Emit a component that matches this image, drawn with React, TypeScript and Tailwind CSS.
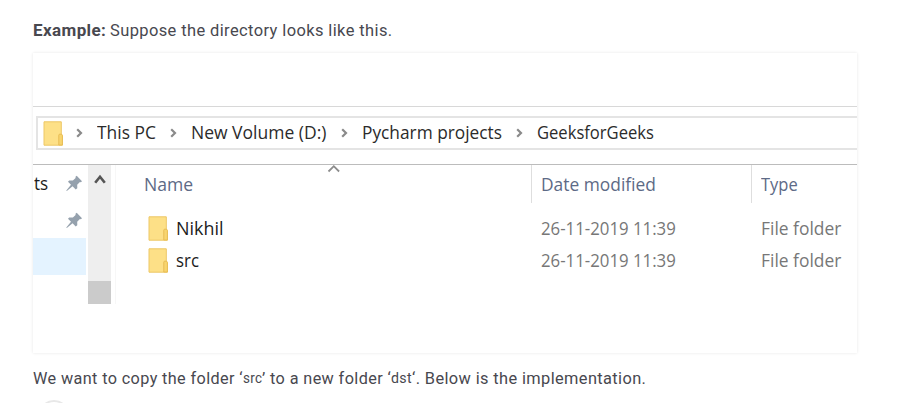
import { useLayoutEffect, useRef, useState } from "react";

const ui = "font-['Open_Sans','Noto_Sans',sans-serif]";
const body = "font-['Roboto','Liberation_Sans',sans-serif]";

/* Condenses or widens a run of text so that it fills a column of known width. */
function Fit({ text, width, className = "" }: { text: string; width: number; className?: string }) {
  const ref = useRef<HTMLSpanElement>(null);
  const [scale, setScale] = useState(1);
  useLayoutEffect(() => {
    if (ref.current) setScale(width / ref.current.offsetWidth);
  }, [width, text]);
  return (
    <span className={`block shrink-0 ${className}`} style={{ width }}>
      <span ref={ref} className="inline-block origin-left whitespace-pre" style={{ transform: `scaleX(${scale})` }}>
        {text}
      </span>
    </span>
  );
}

function Folder({ className = "" }: { className?: string }) {
  return (
    <svg className={`shrink-0 ${className}`} width="20" height="25" viewBox="0 0 20 25">
      <path d="M1 .8h17.3v12.8l1.1 1v9.6H1z" fill="#fde087" stroke="#edc766" strokeWidth="1" />
      <path d="M15.8 24V14.2q0-1 1-1h1.3q1.3 0 1.3 1.4V24z" fill="#f8d56f" stroke="#e8bd55" strokeWidth="1" />
    </svg>
  );
}

function Crumb({ className = "" }: { className?: string }) {
  return (
    <svg className={`shrink-0 ${className}`} width="7" height="10" viewBox="0 0 7 10">
      <path d="M1.2 1.2 5 5 1.2 8.8" fill="none" stroke="#8a8a8a" strokeWidth="2.2" />
    </svg>
  );
}

function Pin() {
  return (
    <svg className="shrink-0" width="17" height="17" viewBox="0 0 17 17">
      <path
        d="M10.7.8 16 6.2l-1.1 1-1-.2-2.7 2.7.1 3.5-1.6 1.2-3.1-3.2L.8 16l-.5-.4L5 9.7 2 6.8l1.2-1.3 3.7.1 2.7-2.7-.1-1.1z"
        fill="#95a1ad"
      />
    </svg>
  );
}

function Row({ name, width }: { name: string; width: number }) {
  return (
    <div className="flex h-8 items-center text-[18.3px] leading-8">
      <Folder className="ml-[37px]" />
      <div className="ml-2 w-[365px] text-[#1c1c1c]">
        <Fit text={name} width={width} />
      </div>
      <Fit text="26-11-2019 11:39" width={135} className="text-[#777]" />
      <Fit text="File folder" width={80} className="ml-[85px] text-[#777]" />
    </div>
  );
}

export default function App() {
  return (
    <main className={`h-[403px] w-[901px] overflow-hidden bg-white pl-[33px] text-[#48484f] ${body}`}>
      <p className="flex h-[53px] pt-[18px] text-[17px] leading-6 tracking-[0.4px]">
        <Fit text="Example:" width={73} className="font-bold" />
        <Fit text="Suppose the directory looks like this." width={283} className="ml-1" />
      </p>

      <section className={`flex h-[300px] w-[824px] flex-col overflow-hidden bg-white shadow-[0_0_3px_#e6e6e6] ${ui}`}>
        <div className="h-[54px] shrink-0 border-b border-[#d8d8d8]" />
        <div className="ml-[3px] mt-[9px] flex h-[34px] shrink-0 items-center border-y-2 border-l-2 border-[#e4e4e4] pl-[5px] text-[18.3px] leading-[30px] text-[#2b2b2b]">
          <Folder />
          <Crumb className="ml-[13px]" />
          <Fit text="This PC" width={59} className="-mt-0.5 ml-[14px]" />
          <Crumb className="ml-[14px]" />
          <Fit text="New Volume (D:)" width={135} className="-mt-0.5 ml-[14px]" />
          <Crumb className="ml-[15px]" />
          <Fit text="Pycharm projects" width={140} className="-mt-0.5 ml-[14px]" />
          <Crumb className="ml-[14px]" />
          <Fit text="GeeksforGeeks" width={117} className="-mt-0.5 ml-[14px]" />
        </div>
        <div className="mt-[14px] flex h-[140px] shrink-0 border-t border-[#bcbcbc]">
          <div className="w-[55px] shrink-0">
            <div className="flex h-[37px] items-center text-[18.3px] text-[#1c1c1c]">
              <Fit text="ts" width={14} className="-mt-px ml-px" />
              <div className="ml-[18px]">
                <Pin />
              </div>
            </div>
            <div className="flex h-9 items-center pl-[33px]">
              <Pin />
            </div>
            <div className="h-[37px] w-[53px] bg-[#e4f3ff]" />
          </div>
          <div className="flex w-[23px] shrink-0 flex-col items-center justify-between bg-[#eeeeee] pt-[9px]">
            <svg width="12" height="11" viewBox="0 0 12 11">
              <path d="M1.2 8.8 6 2.8l4.8 6" fill="none" stroke="#555" strokeWidth="2.6" />
            </svg>
            <div className="h-[23px] w-[23px] bg-[#cbcbcb]" />
          </div>
          <div className="ml-1 min-w-0 flex-1 border-l border-[#f7f7f7]">
            <div className="flex h-[38px] text-[18.3px] leading-[38px] text-[#5d6a86]">
              <Fit text="Name" width={49} className="ml-[28px]" />
              <svg className="-mt-px ml-[134px] shrink-0" width="14" height="10" viewBox="0 0 14 10">
                <path d="m1.5 7.5 5.3-5.3 5.3 5.3" fill="none" stroke="#8c8c8c" strokeWidth="1.8" />
              </svg>
              <div className="ml-[190px] w-[220px] shrink-0 border-l border-[#dedede] pl-[9px]">
                <Fit text="Date modified" width={115} />
              </div>
              <div className="flex-1 border-l border-[#dedede] pl-[9px]">
                <Fit text="Type" width={37} />
              </div>
            </div>
            <div className="-ml-[5px] mt-[9px]">
              <Row name="Nikhil" width={47} />
              <Row name="src" width={23} />
            </div>
          </div>
        </div>
      </section>

      <p className="flex pt-[13px] text-[17px] leading-6 tracking-[0.4px]">
        <Fit text="We want to copy the folder ‘" width={210} />
        <Fit text="src" width={19} className="text-[15.5px]" />
        <Fit text="’ to a new folder ‘" width={129} />
        <Fit text="dst" width={21} className="text-[15.5px]" />
        <Fit text="‘. Below is the implementation." width={234} />
      </p>
      <div className="ml-[5px] mt-[10px] h-8 w-8 rounded-full border-2 border-[#e8e8e8]" />
    </main>
  );
}
